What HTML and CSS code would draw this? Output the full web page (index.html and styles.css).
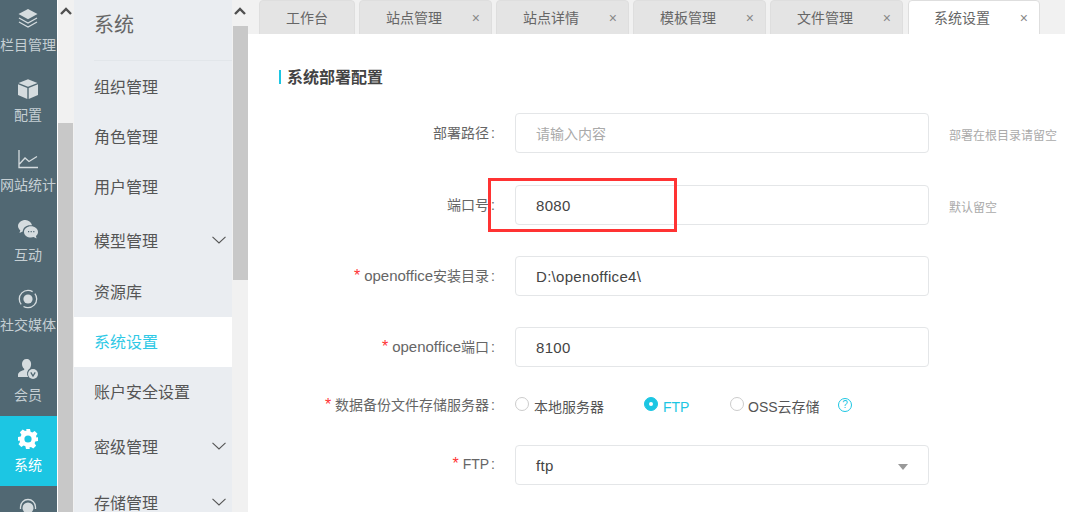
FILE: index.html
```html
<!DOCTYPE html>
<html lang="zh-CN">
<head>
<meta charset="utf-8">
<title>系统设置</title>
<link rel="stylesheet" href="styles.css">
</head>
<body>
<div class="app">
  <nav class="rail">
    <a class="rail-item">
      <svg class="rail-icon" viewBox="0 0 20 20"><path class="fill" d="M10 0 19.500 5 10 10.200.5 5z"/><path class="line" d="M1 9 10 14 19 9M1 13 10 18 19 13"/></svg>
      <span>栏目管理</span>
    </a>
    <a class="rail-item">
      <svg class="rail-icon" viewBox="0 0 20 20"><path class="fill" d="M10 .2 19.500 4 10 7.800.5 4zM0 5.200l9.300 3.700v11L0 16zM20 5.200l-9.300 3.700v11L20 16z"/></svg>
      <span>配置</span>
    </a>
    <a class="rail-item">
      <svg class="rail-icon" viewBox="0 0 20 20"><path class="line" d="M1 1V18.500H20M1.500 15 7 9l4 3.500L19 7.500"/></svg>
      <span>网站统计</span>
    </a>
    <a class="rail-item">
      <svg class="rail-icon" viewBox="0 0 20 20"><path class="fill" d="M7.500 1C3.400 1 0 3.700 0 7c0 1.700.9 3.200 2.300 4.300L1.500 14l3.200-1.500C5 8.500 8.500 6 12.500 6.200h1.600C13 3.200 10.500 1 7.500 1z"/><path class="fill" d="M13 7.300c-3.800 0-7 2.500-7 5.600s3.200 5.600 7 5.600c.9 0 1.800-.1 2.600-.4l3 1.400-.7-2.500c1.300-1 2.100-2.400 2.100-4.100 0-3.100-3.200-5.600-7-5.600z"/><path class="dots" d="M10 12h1.200v1.200H10zM12.600 12h1.200v1.200h-1.200zM15.200 12h1.200v1.200h-1.200z"/></svg>
      <span>互动</span>
    </a>
    <a class="rail-item">
      <svg class="rail-icon" viewBox="0 0 20 20"><circle class="line ring" cx="10" cy="10" r="8.700"/><circle class="fill" cx="10" cy="10" r="4.600"/></svg>
      <span>社交媒体</span>
    </a>
    <a class="rail-item">
      <svg class="rail-icon" viewBox="0 0 20 20"><path class="fill" d="M8.500 0C5.700 0 4 2.100 4 5c0 2 .9 3.800 2.200 4.800v1.300C3 12 0 13.500 0 16v2h10.200A6 6 0 0 1 12 9.300c.7-1.200 1.100-2.800 1.100-4.300C13.100 2.100 11.300 0 8.500 0z"/><circle class="fill" cx="15" cy="15" r="5"/><path class="badge" d="M12.800 13.300 15 17l2.200-3.700"/></svg>
      <span>会员</span>
    </a>
    <a class="rail-item active">
      <svg class="rail-icon" viewBox="0 0 20 20"><path class="gear" fill-rule="evenodd" d="M8 0h4l.6 2.700 1.700.7 2.400-1.500 2.800 2.800-1.500 2.400.7 1.700L20 8v4l-2.700.6-.7 1.700 1.500 2.400-2.800 2.800-2.400-1.500-1.700.7L12 20H8l-.6-2.700-1.700-.7-2.400 1.500-2.800-2.800 1.500-2.400-.7-1.700L0 12V8l2.700-.6.700-1.700-1.500-2.400 2.800-2.800 2.400 1.500 1.700-.7zM10 6.400a3.600 3.600 0 1 0 0 7.200 3.600 3.600 0 0 0 0-7.200z"/></svg>
      <span>系统</span>
    </a>
    <a class="rail-item">
      <svg class="rail-icon" viewBox="0 0 20 20"><path class="line" d="M2.500 10V8a7.500 7.500 0 0 1 15 0v2"/><circle class="fill" cx="10" cy="9" r="5.500"/></svg>
    </a>
  </nav>

  <div class="scrollbar rail-scroll">
    <button class="scroll-arrow" aria-label="向上"><svg viewBox="0 0 12 8"><path d="M1 7 6 2l5 5"/></svg></button>
    <div class="scroll-track"><div class="scroll-thumb"></div></div>
  </div>

  <aside class="menu">
    <h2 class="menu-title">系统</h2>
    <ul class="menu-list">
      <li class="menu-item">组织管理</li>
      <li class="menu-item">角色管理</li>
      <li class="menu-item">用户管理</li>
      <li class="menu-item group">模型管理<svg class="chev" viewBox="0 0 14 8"><path d="M.5.8 7 7 13.500.8"/></svg></li>
      <li class="menu-item">资源库</li>
      <li class="menu-item current">系统设置</li>
      <li class="menu-item">账户安全设置</li>
      <li class="menu-item group tall">密级管理<svg class="chev" viewBox="0 0 14 8"><path d="M.5.8 7 7 13.500.8"/></svg></li>
      <li class="menu-item group tall">存储管理<svg class="chev" viewBox="0 0 14 8"><path d="M.5.8 7 7 13.500.8"/></svg></li>
    </ul>
  </aside>

  <div class="scrollbar menu-scroll">
    <button class="scroll-arrow" aria-label="向上"><svg viewBox="0 0 12 8"><path d="M1 7 6 2l5 5"/></svg></button>
    <div class="scroll-track"><div class="scroll-thumb"></div></div>
  </div>

  <main class="main">
    <div class="tabs">
      <div class="tab plain"><span class="tab-name">工作台</span></div>
      <div class="tab"><span class="tab-name">站点管理</span><span class="tab-close">×</span></div>
      <div class="tab"><span class="tab-name">站点详情</span><span class="tab-close">×</span></div>
      <div class="tab"><span class="tab-name">模板管理</span><span class="tab-close">×</span></div>
      <div class="tab"><span class="tab-name">文件管理</span><span class="tab-close">×</span></div>
      <div class="tab selected"><span class="tab-name">系统设置</span><span class="tab-close">×</span></div>
    </div>

    <section class="content">
      <h1 class="section-title">系统部署配置</h1>
      <form class="form">
        <div class="row wide">
          <label class="label">部署路径<span class="colon">:</span></label>
          <div class="field placeholder">请输入内容</div>
          <span class="hint">部署在根目录请留空</span>
        </div>
        <div class="row">
          <label class="label">端口号<span class="colon">:</span></label>
          <div class="field">8080</div>
          <span class="hint">默认留空</span>
        </div>
        <div class="row">
          <label class="label"><i class="req">*</i> <span class="latin">openoffice</span>安装目录<span class="colon">:</span></label>
          <div class="field">D:\openoffice4\</div>
        </div>
        <div class="row tight">
          <label class="label"><i class="req">*</i> <span class="latin">openoffice</span>端口<span class="colon">:</span></label>
          <div class="field">8100</div>
        </div>
        <div class="row radio-row">
          <label class="label"><i class="req">*</i> 数据备份文件存储服务器<span class="colon">:</span></label>
          <div class="radios">
            <span class="radio r1"><i class="dot"></i>本地服务器</span>
            <span class="radio r2 on"><i class="dot"></i>FTP</span>
            <span class="radio r3"><i class="dot"></i>OSS云存储</span>
            <span class="help">?</span>
          </div>
        </div>
        <div class="row">
          <label class="label"><i class="req">*</i> FTP<span class="colon">:</span></label>
          <div class="field select">ftp<i class="caret"></i></div>
        </div>
      </form>
    </section>
    <div class="annotation"></div>
  </main>
</div>
</body>
</html>
```
FILE: styles.css
```css
* { box-sizing: border-box; }
html, body { margin: 0; height: 100%; overflow: hidden; background: #fff; }
body { font-family: "Liberation Sans", "Noto Sans CJK SC", sans-serif; font-size: 14px; color: #555; }
ul { list-style: none; margin: 0; padding: 0; }
h1, h2 { margin: 0; font-weight: normal; }

.app { display: flex; width: 1065px; height: 512px; overflow: hidden; }

/* icon rail */
.rail { flex: 0 0 57px; background: #516873; margin-top: -4px; height: 586px; display: flex; flex-direction: column; }
.rail-item { flex: 0 0 70px; display: flex; flex-direction: column; align-items: center; padding: 13px 1px 0 0; color: #c5cfd3; font-size: 14px; line-height: 20px; white-space: nowrap; }
.rail-icon { width: 20px; height: 20px; margin-bottom: 6px; overflow: visible; }
.rail-item .fill { fill: #d5dcdf; }
.rail-item .line { fill: none; stroke: #d5dcdf; stroke-width: 1.300; }
.rail-item .ring { stroke-dasharray: 24.300 3; stroke-dashoffset: 6; }
.rail-item .dots { fill: #516873; }
.rail-item .badge { fill: none; stroke: #516873; stroke-width: 1.300; }
.rail-item.active { background: #1cc6e3; color: #fff; }
.rail-item .gear { fill: #fff; }

/* scrollbars */
.scrollbar { flex: 0 0 16px; display: flex; flex-direction: column; background: #f1f1f1; }
.rail-scroll { margin-left: 1px; }
.scroll-arrow { flex: 0 0 26px; border: 0; padding: 0 0 4px; background: transparent; display: flex; align-items: center; justify-content: center; }
.scroll-arrow svg { width: 12px; height: 8px; }
.scroll-arrow path { fill: none; stroke: #505050; stroke-width: 2.400; }
.scroll-track { flex: 1; }
.scroll-thumb { background: #c8c8c8; }
.rail-scroll .scroll-track { padding: 97px 1px 0 0; }
.rail-scroll .scroll-thumb { height: 400px; }
.menu-scroll .scroll-track { padding-left: 1px; }
.menu-scroll .scroll-thumb { height: 254px; }

/* second-level menu */
.menu { flex: 0 0 158px; background: #eaedf1; }
.menu-title { height: 61px; margin-left: 20px; padding-bottom: 9px; border-bottom: 1px solid #e2e6ea; font-size: 20px; line-height: 51px; color: #666; }
.menu-list { padding-top: 1px; }
.menu-item { display: flex; align-items: center; justify-content: space-between; height: 50px; padding: 0 6px 2px 20px; font-size: 16px; color: #555; }
.menu-item.group { height: 55px; padding-top: 3px; }
.menu-item.tall { height: 56px; padding-top: 4px; }
.menu-item.current { background: #fff; color: #2fc9e6; }
.chev { width: 14px; height: 8px; }
.chev path { fill: none; stroke: #555; stroke-width: 1.100; }

/* main */
.main { position: relative; flex: 1; min-width: 0; display: flex; flex-direction: column; background: #fff; }
.tabs { flex: 0 0 34px; display: flex; gap: 4px; padding-left: 11px; background: #f1f1f1; overflow: hidden; }
.tab { position: relative; flex: 0 0 133px; height: 36px; padding-left: 26px; background: #e4e4e4; border: 1px solid #dedede; border-radius: 4px 4px 0 0; line-height: 35px; color: #666; }
.tab.plain { flex-basis: 96px; }
.tab.selected { background: #fff; margin-left: 1px; flex-basis: 132px; padding-left: 25px; }
.tab-close { position: absolute; right: 11px; top: 0; font-size: 14px; color: #888; }

.content { flex: 1; padding: 35px 0 0 31px; }
.section-title { display: flex; height: 18px; font-size: 16px; line-height: 18px; font-weight: bold; color: #444; }
.section-title::before { content: ""; flex: none; width: 2px; height: 14px; margin: 1px 6px 0 0; background: #1cc6e3; }

.form { display: flex; flex-direction: column; margin: 26px 0 0 -31px; }
.row { display: flex; align-items: center; height: 40px; margin-bottom: 31px; }
.row.wide { margin-bottom: 32px; }
.row.tight { margin-bottom: 18px; }
.row.radio-row { margin-bottom: 20px; }
.label { flex: 0 0 267px; padding-right: 20px; margin-top: -2px; text-align: right; color: #666; white-space: nowrap; }
.colon { margin-left: 2px; }
.latin { font-size: 15px; }
.req { font-style: normal; font-size: 16px; color: #f33; }
.field { position: relative; flex: 0 0 414px; height: 40px; padding: 0 20px; border: 1px solid #e4e6e8; border-radius: 4px; font-size: 15px; letter-spacing: .3px; line-height: 40px; color: #444; }
.field.placeholder { font-size: 14px; letter-spacing: 0; color: #aaa; }
.hint { margin: 2px 0 0 20px; font-size: 12px; color: #aaa; white-space: nowrap; }
.caret { position: absolute; right: 20px; top: 18px; width: 0; height: 0; border-left: 5.500px solid transparent; border-right: 5.500px solid transparent; border-top: 6.500px solid #999; }

.radios { display: flex; align-items: center; height: 20px; margin-top: 4px; }
.radio { display: flex; align-items: center; white-space: nowrap; color: #555; line-height: 20px; }
.dot { flex: none; position: relative; top: -3px; width: 14px; height: 14px; margin-right: 5px; border: 1px solid #ccc; border-radius: 50%; background: #fff; }
.r1 { width: 129px; }
.r2 { width: 86px; }
.r3 { width: 108px; }
.r3 .dot { margin-right: 4px; }
.radio.on { color: #1cc6e3; }
.on .dot { background: #1cc6e3; border-color: #1cc6e3; }
.on .dot::after { content: ""; position: absolute; left: 4px; top: 4px; width: 4px; height: 4px; border-radius: 50%; background: #fff; }
.help { width: 14px; height: 14px; border: 1px solid #1cc6e3; border-radius: 50%; font-size: 10px; line-height: 12px; text-align: center; color: #1cc6e3; position: relative; top: -2px; }

/* red hand-drawn annotation over the screenshot */
.annotation { position: absolute; left: 240px; top: 178px; width: 189px; height: 54px; border: 3px solid #f33; }
```
